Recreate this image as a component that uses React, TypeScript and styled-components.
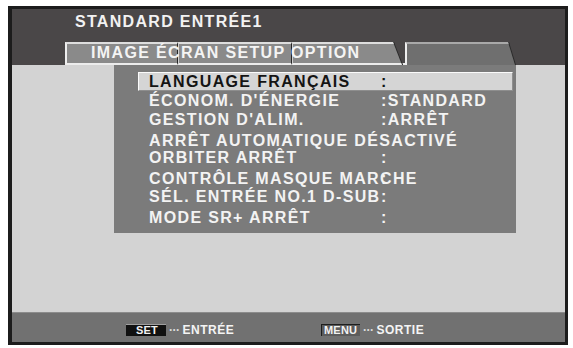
import React from "react";
import styled, { createGlobalStyle } from "styled-components";

const Global = createGlobalStyle`
  html, body { margin: 0; padding: 0; background: #ffffff; }
  body { font-family: "Liberation Sans", Arial, Helvetica, sans-serif; }
  #root { padding: 6px 0 0 8px; }
`;

const Frame = styled.div`
  width: 560px;
  height: 339px;
  box-sizing: border-box;
  border: 3px solid #1c1c1c;
  border-left-width: 4px;
  background: #d3d3d3;
  display: flex;
  flex-direction: column;
  font-weight: 700;
`;

const Header = styled.div`
  background: #4a4748;
  padding-top: 5px;
  display: flex;
  flex-direction: column;
`;

const Title = styled.div`
  padding-left: 63px;
  font-size: 16px;
  line-height: 16px;
  letter-spacing: 1.3px;
  color: #f2f2f2;
  white-space: nowrap;
`;

const TabRow = styled.div`
  margin-top: 12px;
  margin-left: 53px;
  display: grid;
  height: 23px;
`;

const TabFills = styled.div`
  grid-area: 1 / 1;
  display: flex;
  align-items: flex-end;
`;

const TabWrap = styled.div`
  height: 23px;
  filter: drop-shadow(1px 0 0 #2a2a2a);
`;

const Tab = styled.div<{ $w: number; $slant?: number; $active?: boolean; $first?: boolean; $divider?: boolean }>`
  width: ${(p) => p.$w}px;
  height: 23px;
  box-sizing: border-box;
  background: ${(p) => (p.$active ? "#6f6f6f" : "#8a8a8a")};
  border-top: 2px solid ${(p) => (p.$active ? "#a9a9a9" : "#dedede")};
  border-bottom: ${(p) => (p.$active ? "none" : "2px solid #ececec")};
  border-left: ${(p) => (p.$first || p.$active ? "2px solid #eeeeee" : "1px solid #d0d0d0")};
  border-right: ${(p) => (p.$divider ? "1px solid #262626" : "none")};
  clip-path: ${(p) =>
    p.$slant ? `polygon(0 0, calc(100% - ${p.$slant}px) 0, 100% 100%, 0 100%)` : "none"};
`;

const TabGap = styled.div`
  width: 3px;
  height: 2px;
  background: #ececec;
`;

const TabLabel = styled.div`
  grid-area: 1 / 1;
  position: relative;
  z-index: 1;
  height: 21px;
  line-height: 21px;
  padding-left: 26px;
  font-size: 16px;
  letter-spacing: 1.35px;
  color: #f4f4f4;
  white-space: nowrap;
  pointer-events: none;
`;

const Content = styled.div`
  flex: 1;
  padding-left: 102px;
`;

const Panel = styled.div`
  width: 402px;
  height: 168px;
  box-sizing: border-box;
  background: #7b7b7b;
  padding: 7px 3px 0 24px;
  display: flex;
  flex-direction: column;
`;

const Row = styled.div<{ $hl?: boolean; $top: number }>`
  display: grid;
  grid-template-columns: 232px 1fr;
  margin-top: ${(p) => p.$top}px;
  height: ${(p) => (p.$hl ? 19 : 16)}px;
  box-sizing: border-box;
  padding-left: ${(p) => (p.$hl ? 10 : 11)}px;
  background: ${(p) => (p.$hl ? "#d5d5d5" : "transparent")};
  border: ${(p) => (p.$hl ? "1px solid" : "none")};
  border-color: #fbfbfb #8e8e8e #8e8e8e #fbfbfb;
  color: ${(p) => (p.$hl ? "#141414" : "#f3f3f3")};
  font-size: 16px;
  letter-spacing: 1.35px;
  align-items: center;
  white-space: nowrap;
`;

const Label = styled.span`
  grid-row: 1;
  grid-column: 1 / -1;
  line-height: 16px;
`;

const Value = styled.span`
  grid-row: 1;
  grid-column: 2;
  line-height: 16px;
`;

const Footer = styled.div`
  height: 30px;
  box-sizing: border-box;
  background: #717171;
  border-top: 1px solid #8c8c8c;
  padding: 5px 0 0 114px;
  display: flex;
  align-items: center;
`;

const FooterItem = styled.div<{ $w?: number }>`
  display: flex;
  align-items: center;
  width: ${(p) => (p.$w ? `${p.$w}px` : "auto")};
`;

const Badge = styled.span<{ $kind: "set" | "menu" }>`
  display: inline-block;
  height: 11px;
  line-height: 11px;
  font-size: 11px;
  letter-spacing: 0.2px;
  color: #f2f2f2;
  box-sizing: content-box;
  ${(p) =>
    p.$kind === "set"
      ? `background:#111111; border-top:1px solid #a0a0a0; padding:0 3px 0 10px; width:27px;`
      : `background:#5c5c5c; border-top:1px solid #1e1e1e; border-left:1px solid #1e1e1e; padding:0 3px 0 2px; width:33px;`}
`;

const Dots = styled.span`
  font-size: 12px;
  color: #dcdcdc;
  margin: 0 3px 0 3px;
  letter-spacing: -0.5px;
`;

const FooterText = styled.span`
  font-size: 12px;
  letter-spacing: 0.5px;
  color: #f4f4f4;
`;

const rows = [
  { label: "LANGUAGE FRANÇAIS", value: ":", hl: true, top: 0 },
  { label: "ÉCONOM. D'ÉNERGIE", value: ":STANDARD", top: 2 },
  { label: "GESTION D'ALIM.", value: ":ARRÊT", top: 3 },
  { label: "ARRÊT AUTOMATIQUE DÉSACTIVÉ", value: "", top: 5 },
  { label: "ORBITER ARRÊT", value: ":", top: 1 },
  { label: "CONTRÔLE MASQUE MARCHE", value: ":", top: 5 },
  { label: "SÉL. ENTRÉE NO.1 D-SUB", value: ":", top: 2 },
  { label: "MODE SR+ ARRÊT", value: ":", top: 5 },
];

export default function App() {
  return (
    <>
      <Global />
      <Frame>
        <Header>
          <Title>STANDARD ENTRÉE1</Title>
          <TabRow>
            <TabFills>
              <Tab $w={113} $first $divider />
              <Tab $w={114} $divider />
              <TabWrap>
                <Tab $w={110} $slant={9} />
              </TabWrap>
              <TabGap />
              <TabWrap>
                <Tab $w={110} $slant={7} $active />
              </TabWrap>
            </TabFills>
            <TabLabel>IMAGE ÉCRAN SETUP OPTION</TabLabel>
          </TabRow>
        </Header>
        <Content>
          <Panel>
            {rows.map((r) => (
              <Row key={r.label} $hl={r.hl} $top={r.top}>
                <Label>{r.label}</Label>
                <Value>{r.value}</Value>
              </Row>
            ))}
          </Panel>
        </Content>
        <Footer>
          <FooterItem $w={195}>
            <Badge $kind="set">SET</Badge>
            <Dots>···</Dots>
            <FooterText>ENTRÉE</FooterText>
          </FooterItem>
          <FooterItem>
            <Badge $kind="menu">MENU</Badge>
            <Dots>···</Dots>
            <FooterText>SORTIE</FooterText>
          </FooterItem>
        </Footer>
      </Frame>
    </>
  );
}
